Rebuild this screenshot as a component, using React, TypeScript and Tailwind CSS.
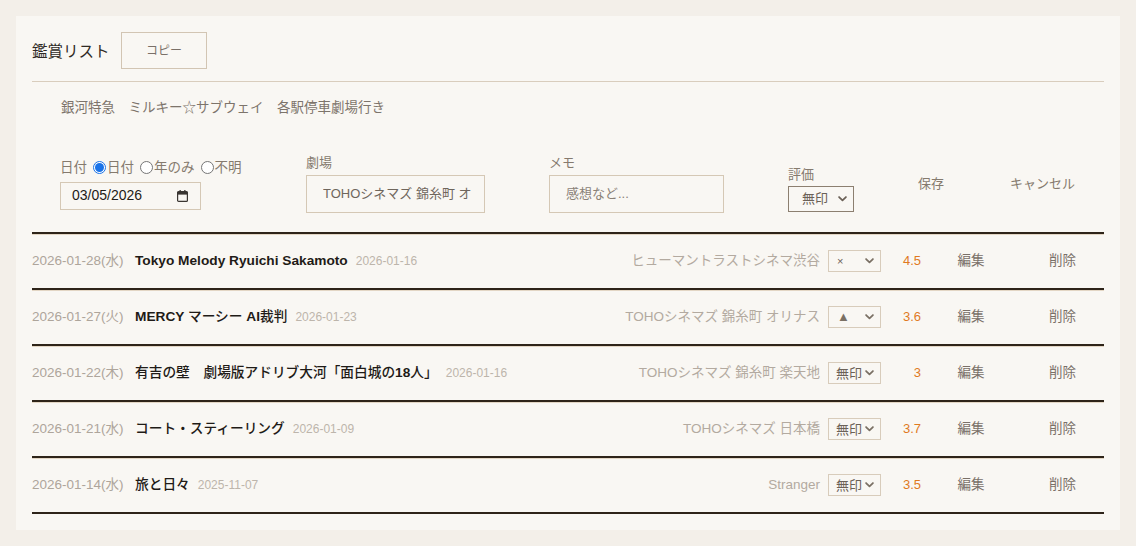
import React from "react";

const FONT = { fontFamily: '"Liberation Sans", "Noto Sans CJK JP", sans-serif' };

function Chevron({ className = "" }: { className?: string }) {
  return (
    <svg viewBox="0 0 10 7" className={className} width="9" height="6">
      <path d="M1 1.2 L5 5.2 L9 1.2" fill="none" stroke="currentColor" strokeWidth="2" strokeLinecap="round" strokeLinejoin="round" />
    </svg>
  );
}

function RowSelect({ value }: { value: string }) {
  const isX = value === "×";
  const isTri = value === "▲";
  return (
    <div className="flex h-[22px] w-[53px] items-center justify-between border border-[#d8ccbb] pl-[7px] pr-[6px] text-[#6b6157]">
      <span className={isX ? "text-[11px] pl-[1px]" : isTri ? "text-[13px] text-[#7a7064] pl-[1px]" : "text-[13px] leading-none"}>{value}</span>
      <Chevron className="text-[#7a7064]" />
    </div>
  );
}

type Row = { date: string; title: string; watched: string; theater: string; mark: string; rating: string };

const rows: Row[] = [
  { date: "2026-01-28(水)", title: "Tokyo Melody Ryuichi Sakamoto", watched: "2026-01-16", theater: "ヒューマントラストシネマ渋谷", mark: "×", rating: "4.5" },
  { date: "2026-01-27(火)", title: "MERCY マーシー AI裁判", watched: "2026-01-23", theater: "TOHOシネマズ 錦糸町 オリナス", mark: "▲", rating: "3.6" },
  { date: "2026-01-22(木)", title: "有吉の壁　劇場版アドリブ大河「面白城の18人」", watched: "2026-01-16", theater: "TOHOシネマズ 錦糸町 楽天地", mark: "無印", rating: "3" },
  { date: "2026-01-21(水)", title: "コート・スティーリング", watched: "2026-01-09", theater: "TOHOシネマズ 日本橋", mark: "無印", rating: "3.7" },
  { date: "2026-01-14(水)", title: "旅と日々", watched: "2025-11-07", theater: "Stranger", mark: "無印", rating: "3.5" },
];

function Title({ text }: { text: string }) {
  const parts = text.split(/([\u3000-\u30ff\u4e00-\u9fff\uff00-\uffef]+)/).filter((p) => p.length > 0);
  return (
    <span className="whitespace-nowrap text-[13.7px] text-[#1f1b17]">
      {parts.map((p, i) =>
        /[\u3000-\u30ff\u4e00-\u9fff\uff00-\uffef]/.test(p) ? (
          <span key={i} className="font-medium">{p}</span>
        ) : (
          <span key={i} className="font-bold">{p}</span>
        )
      )}
    </span>
  );
}

function Radio({ checked, label }: { checked?: boolean; label: string }) {
  return (
    <span className="flex items-center gap-[1px]">
      {checked ? (
        <span className="flex h-[13px] w-[13px] items-center justify-center rounded-full border border-[#1a73e8] bg-white">
          <span className="h-[9px] w-[9px] rounded-full bg-[#1a73e8]" />
        </span>
      ) : (
        <span className="h-[13px] w-[13px] rounded-full border border-[#767676] bg-white" />
      )}
      <span>{label}</span>
    </span>
  );
}

export default function App() {
  return (
    <div className="min-h-[546px] w-full bg-[#f3efe9] p-4" style={FONT}>
      <div className="bg-[#f9f7f3] px-4 pt-4 pb-4">
        {/* header */}
        <div className="flex items-center gap-[11px] border-b border-[#d9cdbd] pb-[12px]">
          <h1 className="w-[78px] whitespace-nowrap text-[15.5px] text-[#2f2a25]" style={{ fontFamily: '"Noto Sans CJK JP", serif' }}>鑑賞リスト</h1>
          <button className="h-[37px] w-[86px] border border-[#d2c5b3] text-[12px] text-[#7a7068]">コピー</button>
        </div>

        {/* subtitle */}
        <div className="mt-[16px] pl-[29px] text-[13.5px] leading-[20px] text-[#7d746b]">
          銀河特急　ミルキー☆サブウェイ　各駅停車劇場行き
        </div>

        {/* form */}
        <div className="mt-[37px] mb-[19px] flex items-center gap-[64px] pl-[28px] text-[13px] text-[#857a6e]">
          <div className="flex w-[182px] flex-col gap-[5px]">
            <div className="flex items-center gap-[6px] whitespace-nowrap text-[13.5px] leading-[18px]">
              <span>日付</span>
              <Radio checked label="日付" />
              <Radio label="年のみ" />
              <Radio label="不明" />
            </div>
            <div className="flex h-[28px] w-[141px] items-center justify-between border border-[#d5c8b5] pl-[11px] pr-[12px] text-[14px] text-[#1f1b17]">
              <span>03/05/2026</span>
              <svg width="11" height="12" viewBox="0 0 11 12">
                <rect x="0.6" y="1.6" width="9.8" height="9.8" rx="1" fill="none" stroke="#3a3632" strokeWidth="1.2" />
                <rect x="0.6" y="1.6" width="9.8" height="3" fill="#3a3632" />
                <rect x="2.5" y="0" width="1.3" height="2.5" fill="#3a3632" />
                <rect x="7.2" y="0" width="1.3" height="2.5" fill="#3a3632" />
              </svg>
            </div>
          </div>

          <div className="flex flex-col gap-[4px]">
            <span className="leading-[16px]">劇場</span>
            <div className="flex h-[38px] w-[179px] items-center overflow-hidden whitespace-nowrap border border-[#d5c8b5] pl-[16px] pr-[12px] text-[#6f665c]">
              <span className="overflow-hidden">TOHOシネマズ 錦糸町 オリナス</span>
            </div>
          </div>

          <div className="flex flex-col gap-[4px]">
            <span className="leading-[16px]">メモ</span>
            <div className="flex h-[38px] w-[175px] items-center border border-[#d5c8b5] pl-[16px] text-[#8a8177]">
              感想など...
            </div>
          </div>

          <div className="flex flex-col gap-[3px] pt-[10px]">
            <span className="leading-[16px]">評価</span>
            <div className="flex h-[26px] w-[66px] items-center justify-between border border-[#8c7f70] pl-[13px] pr-[6px] text-[#6b6157]">
              <span>無印</span>
              <Chevron className="text-[#6b6157]" />
            </div>
          </div>

          <button className="w-[26px] whitespace-nowrap text-[13px] text-[#857a6e]">保存</button>
          <button className="ml-[2px] whitespace-nowrap text-[13px] text-[#857a6e]">キャンセル</button>
        </div>

        {/* rows */}
        <div className="border-b-2 border-[#2e2419]">
          {rows.map((r, i) => (
            <div
              key={i}
              className="flex h-[56px] items-center border-t-2 border-[#2e2419] text-[13px] shadow-[inset_0_1px_0_#e3d6c4]"
            >
              <span className="w-[103px] shrink-0 whitespace-nowrap text-[13.5px] text-[#aea59b]">{r.date}</span>
              <Title text={r.title} />
              <span className="ml-[8px] text-[12px] text-[#bdb5ab]">{r.watched}</span>
              <span className="ml-auto whitespace-nowrap text-[13.5px] text-[#b3aaa0]">{r.theater}</span>
              <span className="ml-[8px]">
                <RowSelect value={r.mark} />
              </span>
              <span className="w-[40px] text-right text-[#e07a1f]">{r.rating}</span>
              <span className="w-[100px] text-center text-[13.5px] text-[#7a7068]">編集</span>
              <span className="w-[83px] text-center text-[13.5px] text-[#7a7068]">削除</span>
            </div>
          ))}
        </div>
      </div>
    </div>
  );
}
